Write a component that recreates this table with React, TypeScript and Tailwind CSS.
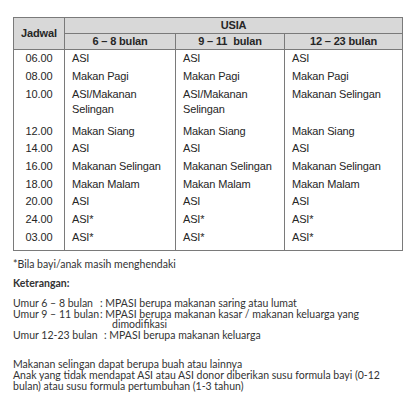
import React from "react";

type Row = { t: string; a: string[]; b: string[]; c: string[]; h: string };

const rows: Row[] = [
  { t: "06.00", a: ["ASI"], b: ["ASI"], c: ["ASI"], h: "h-[18px]" },
  { t: "08.00", a: ["Makan Pagi"], b: ["Makan Pagi"], c: ["Makan Pagi"], h: "h-[18px]" },
  { t: "10.00", a: ["ASI/Makanan", "Selingan"], b: ["ASI/Makanan", "Selingan"], c: ["Makanan Selingan"], h: "h-[36.5px]" },
  { t: "12.00", a: ["Makan Siang"], b: ["Makan Siang"], c: ["Makan Siang"], h: "h-[17.7px]" },
  { t: "14.00", a: ["ASI"], b: ["ASI"], c: ["ASI"], h: "h-[17.7px]" },
  { t: "16.00", a: ["Makanan Selingan"], b: ["Makanan Selingan"], c: ["Makanan Selingan"], h: "h-[17.7px]" },
  { t: "18.00", a: ["Makan Malam"], b: ["Makan Malam"], c: ["Makan Malam"], h: "h-[17.7px]" },
  { t: "20.00", a: ["ASI"], b: ["ASI"], c: ["ASI"], h: "h-[17.7px]" },
  { t: "24.00", a: ["ASI*"], b: ["ASI*"], c: ["ASI*"], h: "h-[17.7px]" },
  { t: "03.00", a: ["ASI*"], b: ["ASI*"], c: ["ASI*"], h: "h-[21.5px]" },
];

function Cell({ lines }: { lines: string[] }) {
  return (
    <div className="border-l border-[#7a7a7a] pl-[7px] pt-[1px]">
      {lines.map((l, i) => (
        <div key={i}>{l}</div>
      ))}
    </div>
  );
}

export default function App() {
  return (
    <div className="w-[415px] h-[400px] bg-white overflow-hidden">
      <div
        className="ml-[13px] mt-[17px] w-[390px] border border-[#7a7a7a] text-[#262626] text-[11px] leading-[15px] tracking-[-0.15px]"
        style={{ fontFamily: '"Liberation Sans", Arial, sans-serif' }}
      >
        <div className="grid grid-cols-[50px_111px_109px_118px] bg-[#d8d8d8] font-bold border-b border-[#7a7a7a]">
          <div className="row-span-2 flex items-center justify-center">Jadwal</div>
          <div className="col-span-3 h-[16px] flex items-center justify-center border-l border-b border-[#7a7a7a]">
            USIA
          </div>
          <div className="h-[15px] flex items-center justify-center border-l border-[#7a7a7a]">6 – 8 bulan</div>
          <div className="h-[15px] flex items-center justify-center border-l border-[#7a7a7a]">9 – 11{"\u00a0"} bulan</div>
          <div className="h-[15px] flex items-center justify-center border-l border-[#7a7a7a]">12 – 23 bulan</div>
        </div>
        {rows.map((r) => (
          <div key={r.t} className={`grid grid-cols-[50px_111px_109px_118px] ${r.h}`}>
            <div className="text-center pt-[1px]">{r.t}</div>
            <Cell lines={r.a} />
            <Cell lines={r.b} />
            <Cell lines={r.c} />
          </div>
        ))}
      </div>

      <div
        className="ml-[13px] text-[10.5px] text-[#333333] whitespace-nowrap"
        style={{ fontFamily: 'Lato, "Open Sans", sans-serif' }}
      >
        <div className="mt-[7.5px] leading-[11px]">*Bila bayi/anak masih menghendaki</div>
        <div className="mt-[8.3px] leading-[11px] font-bold">Keterangan:</div>
        <div className="mt-[9px] leading-[10.6px]">
          <div className="flex">
            <span className="w-[87px] shrink-0">Umur 6 – 8 bulan</span>
            <span>: MPASI berupa makanan saring atau lumat</span>
          </div>
          <div className="flex">
            <span className="w-[87px] shrink-0">Umur 9 – 11 bulan</span>
            <span>: MPASI berupa makanan kasar / makanan keluarga yang</span>
          </div>
          <div className="pl-[99px]">dimodifikasi</div>
          <div className="flex">
            <span className="w-[91px] shrink-0">Umur 12-23 bulan</span>
            <span>: MPASI berupa makanan keluarga</span>
          </div>
        </div>
        <div className="mt-[18.5px] leading-[11px]">
          <div>Makanan selingan dapat berupa buah atau lainnya</div>
          <div>Anak yang tidak mendapat ASI atau ASI donor diberikan susu formula bayi (0-12</div>
          <div>bulan) atau susu formula pertumbuhan (1-3 tahun)</div>
        </div>
      </div>
    </div>
  );
}
